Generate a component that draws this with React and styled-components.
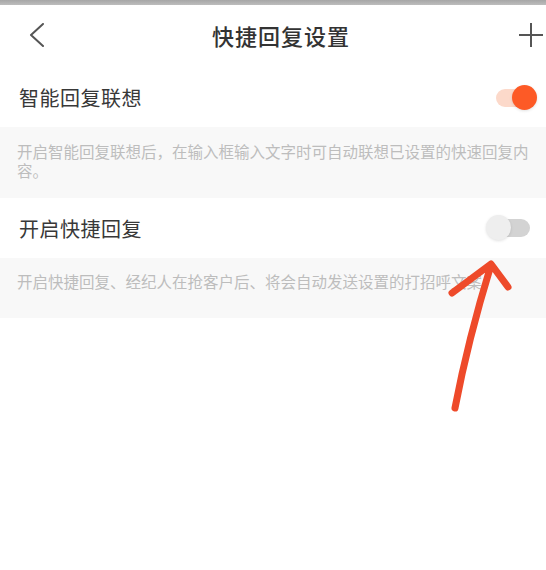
import React, { useState } from "react";
import styled, { createGlobalStyle } from "styled-components";

const GlobalStyle = createGlobalStyle`
  html, body {
    margin: 0;
    padding: 0;
    background: #ffffff;
    font-family: "Noto Sans CJK SC", "Noto Sans", sans-serif;
  }
`;

export default function App() {
  const [smart, setSmart] = useState(true);
  const [quick, setQuick] = useState(false);

  return (
    <Page>
      <GlobalStyle />
      <StatusStrip />
      <Header>
        <IconButton aria-label="back">
          <svg width="16" height="24" viewBox="0 0 16 24">
            <polyline
              points="14,1 2,12 14,23"
              fill="none"
              stroke="#555"
              strokeWidth="2"
              strokeLinecap="round"
              strokeLinejoin="round"
            />
          </svg>
        </IconButton>
        <Title>快捷回复设置</Title>
        <IconButton aria-label="add" $right>
          <svg width="26" height="26" viewBox="0 0 26 26">
            <path d="M13 1 V25 M1 13 H25" stroke="#555" strokeWidth="2" />
          </svg>
        </IconButton>
      </Header>

      <Row $h={59}>
        <Label>智能回复联想</Label>
        <Switch $on={smart} onClick={() => setSmart(!smart)} />
      </Row>
      <Note $h={71} $top={15}>
        开启智能回复联想后，在输入框输入文字时可自动联想已设置的快速回复内容。
      </Note>

      <Row $h={60}>
        <Label>开启快捷回复</Label>
        <Switch $on={quick} onClick={() => setQuick(!quick)} />
      </Row>
      <Note $h={60} $top={14}>
        开启快捷回复、经纪人在抢客户后、将会自动发送设置的打招呼文案
      </Note>

      <Arrow width="546" height="570" viewBox="0 0 546 570">
        <path
          d="M455 408 Q468 340 491 265 M452 293 L491 264 L508 287"
          fill="none"
          stroke="#ee4a2a"
          strokeWidth="7"
          strokeLinecap="round"
          strokeLinejoin="round"
        />
      </Arrow>
    </Page>
  );
}

const Switch = ({ $on, onClick }) => (
  <SwitchBox onClick={onClick}>
    <Track $on={$on} />
    <Knob $on={$on} />
  </SwitchBox>
);

const Page = styled.div`
  position: relative;
  width: 546px;
  height: 570px;
  overflow: hidden;
  background: #fff;
`;

const StatusStrip = styled.div`
  height: 5px;
  background: linear-gradient(#a6a6a6, #bdbdbd);
`;

const Header = styled.div`
  height: 63px;
  display: grid;
  grid-template-columns: 80px 1fr 62px;
  align-items: center;
  padding: 0 2px 4px 0;
  box-sizing: border-box;
`;

const IconButton = styled.div`
  display: flex;
  align-items: center;
  justify-content: ${(p) => (p.$right ? "flex-end" : "flex-start")};
  padding-left: ${(p) => (p.$right ? "0" : "29px")};
`;

const Title = styled.div`
  text-align: center;
  font-size: 22px;
  font-weight: 500;
  color: #333;
  letter-spacing: 1px;
`;

const Row = styled.div`
  height: ${(p) => p.$h}px;
  display: flex;
  align-items: center;
  justify-content: space-between;
  padding: 0 8px 0 19px;
  background: #fff;
`;

const Label = styled.div`
  font-size: 20px;
  color: #383838;
  letter-spacing: 0.5px;
`;

const Note = styled.div`
  height: ${(p) => p.$h}px;
  box-sizing: border-box;
  background: #f8f8f8;
  padding: ${(p) => p.$top}px 14px 0 17px;
  font-size: 15.5px;
  line-height: 19px;
  color: #bdbdbd;
`;

const SwitchBox = styled.div`
  position: relative;
  width: 52px;
  height: 26px;
  cursor: pointer;
`;

const Track = styled.div`
  position: absolute;
  left: 10px;
  right: 8px;
  top: 4px;
  height: 18px;
  border-radius: 9px;
  background: ${(p) => (p.$on ? "#fcd9ca" : "#d3d3d3")};
`;

const Knob = styled.div`
  position: absolute;
  top: 0;
  left: ${(p) => (p.$on ? "26px" : "0")};
  width: 25px;
  height: 25px;
  border-radius: 50%;
  background: ${(p) => (p.$on ? "#fd5a26" : "#eeeeee")};
  box-shadow: 0 1px 3px rgba(0, 0, 0, 0.12);
`;

const Arrow = styled.svg`
  position: absolute;
  left: 0;
  top: 0;
  pointer-events: none;
`;
